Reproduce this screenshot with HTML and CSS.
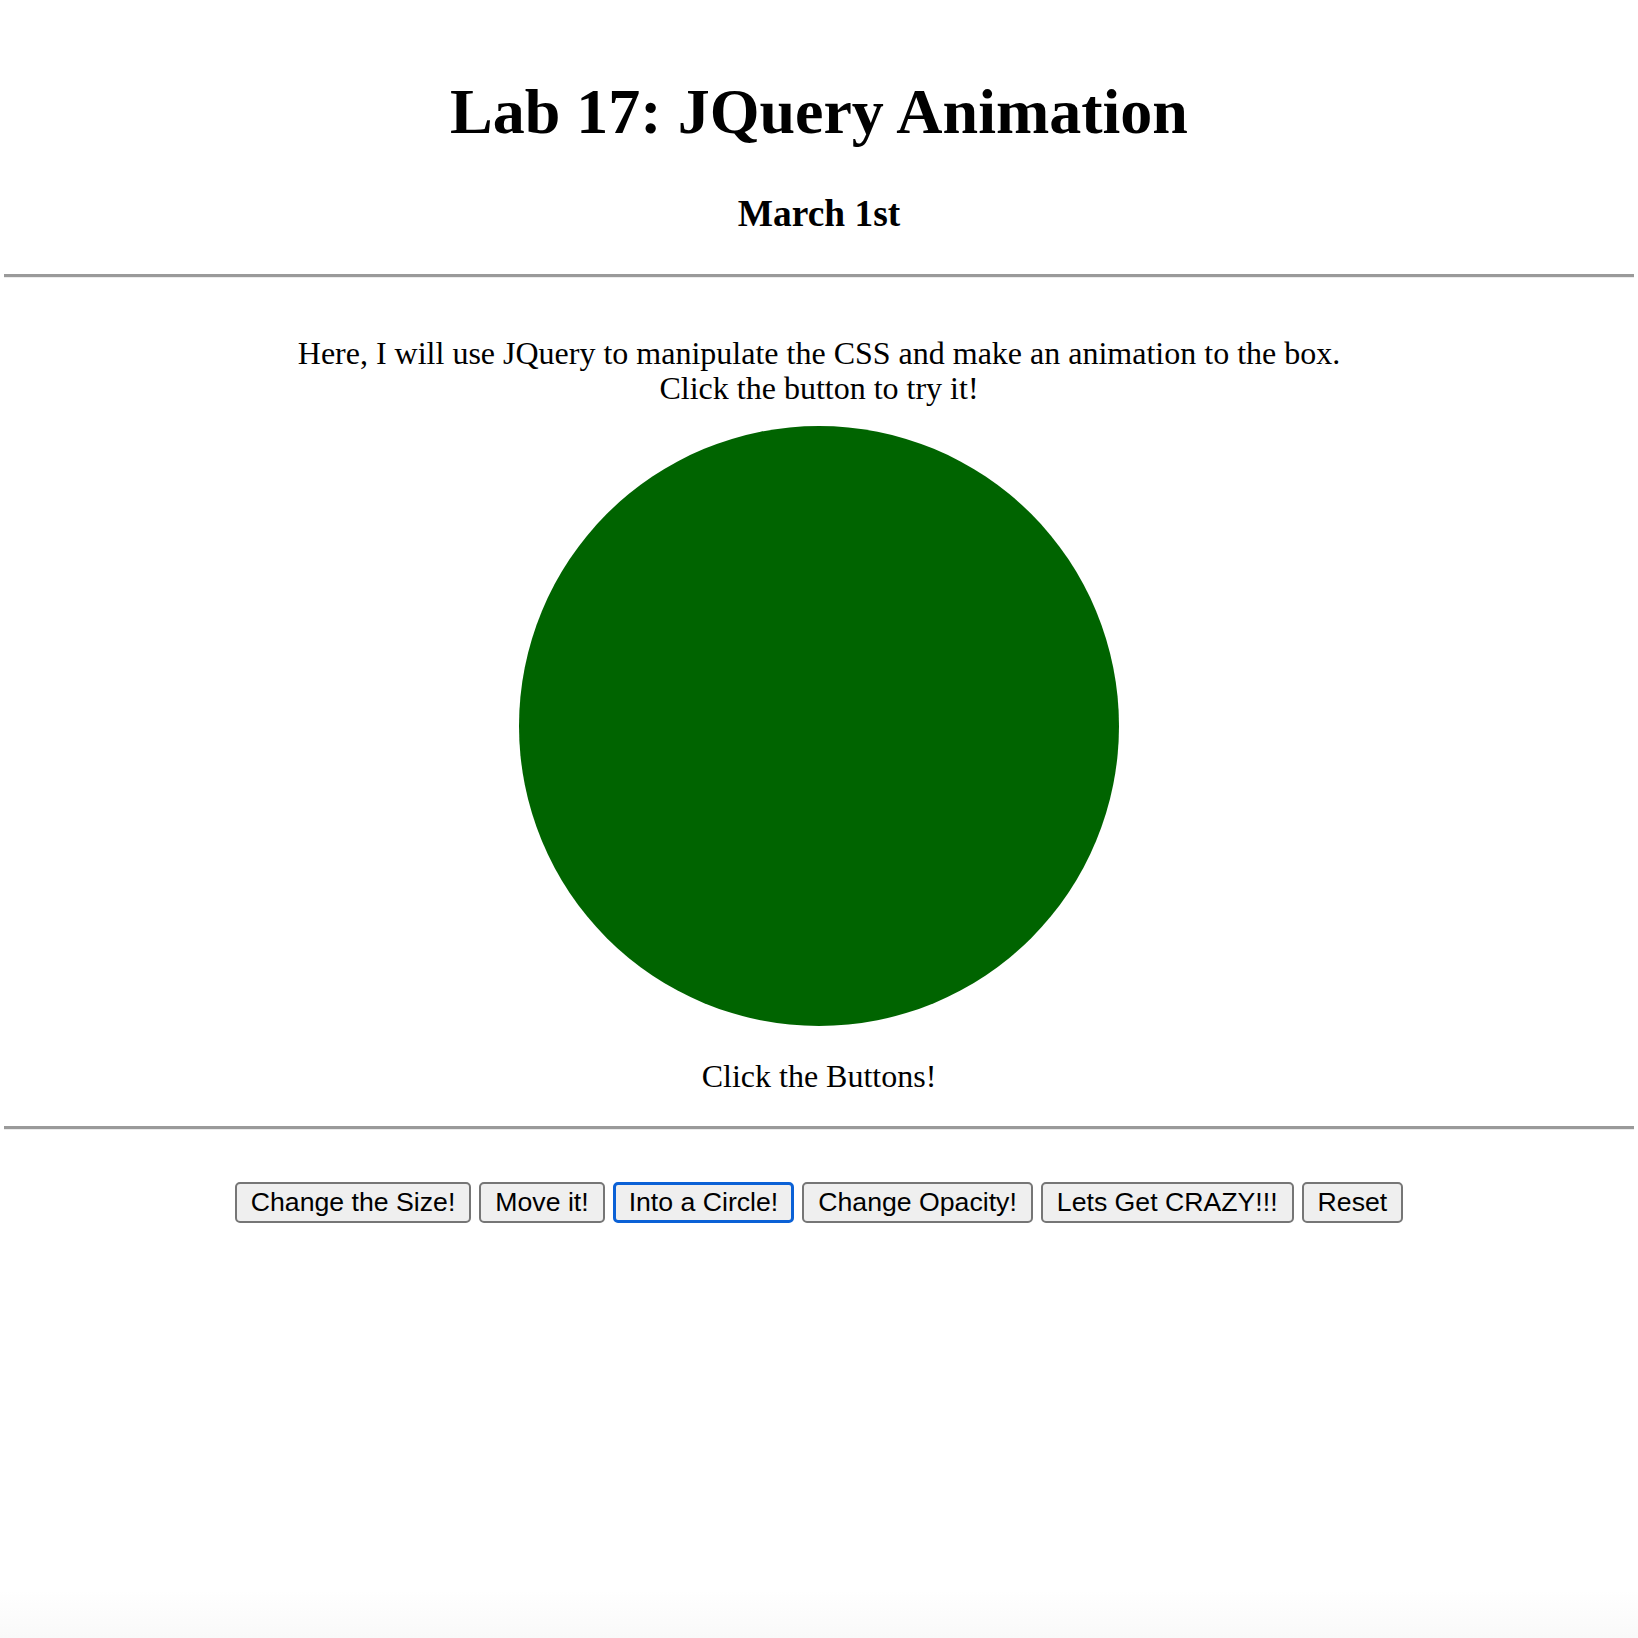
FILE: index.html
```html
<!DOCTYPE html>
<html lang="en">
<head>
<meta charset="utf-8">
<title>Lab 17: JQuery Animation</title>
<link rel="stylesheet" href="styles.css">
</head>
<body>
<header class="header">
  <h1 class="title">Lab 17: JQuery Animation</h1>
  <h3 class="date">March 1st</h3>
</header>
<hr class="rule">
<main class="content">
  <p class="intro">Here, I will use JQuery to manipulate the CSS and make an animation to the box.<br>Click the button to try it!</p>
  <div class="box"></div>
  <p class="caption">Click the Buttons!</p>
</main>
<hr class="rule">
<div class="controls">
  <button class="btn">Change the Size!</button>
  <button class="btn">Move it!</button>
  <button class="btn btn-focus">Into a Circle!</button>
  <button class="btn">Change Opacity!</button>
  <button class="btn">Lets Get CRAZY!!!</button>
  <button class="btn">Reset</button>
</div>
</body>
</html>
```

FILE: styles.css
```css
html {
  height: 100%;
}
body {
  margin: 0;
  min-height: 1638px;
  padding-top: 32px;
  box-sizing: border-box;
  font-family: "Liberation Serif", "Times New Roman", serif;
  font-size: 32px;
  color: #000;
  background: linear-gradient(to bottom, #ffffff 1590px, #f9f9f9 1638px);
}
.header {
  text-align: center;
}
.title {
  font-size: 64px;
  font-weight: bold;
  margin: 43px 0 43px;
}
.date {
  font-size: 37.4px;
  font-weight: bold;
  margin: 0 0 39px;
}
.rule {
  margin: 0 4px;
  height: 0;
  border: 0;
  border-top: 3px solid #9a9a9a;
  border-bottom: 1px solid #ececec;
}
.content {
  display: flex;
  flex-direction: column;
  align-items: center;
  text-align: center;
}
.intro {
  margin: 58px 0 20px;
  line-height: 35px;
}
.box {
  width: 600px;
  height: 600px;
  border-radius: 50%;
  background: #006400;
}
.caption {
  margin: 32px 0 31px;
  line-height: 37px;
}
.controls {
  display: flex;
  justify-content: center;
  gap: 8px;
  margin-top: 52px;
}
.btn {
  font-family: "Liberation Sans", Arial, sans-serif;
  font-size: 26.67px;
  height: 41px;
  padding: 0 14px;
  background: #efefef;
  border: 2px solid #767676;
  border-radius: 5px;
  color: #000;
  margin: 0;
}
.btn-focus {
  border: 3px solid #0b61d6;
  padding: 0 13px;
}
```
